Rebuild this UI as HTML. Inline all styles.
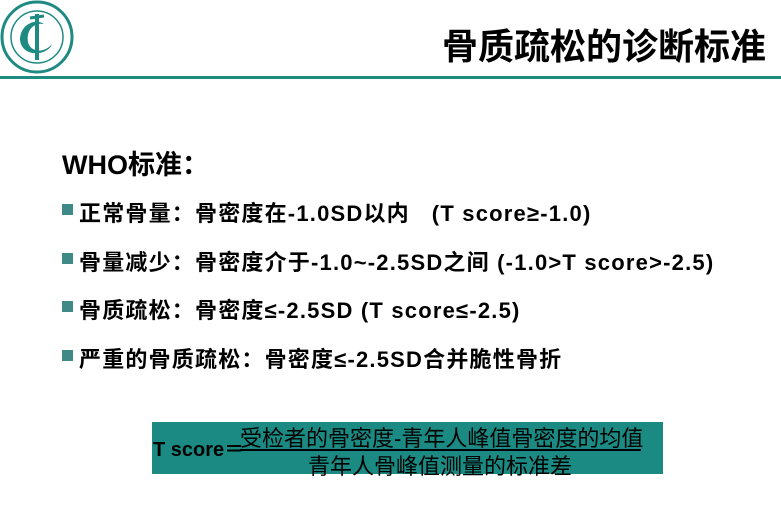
<!DOCTYPE html>
<html><head><meta charset="utf-8"><style>
body{margin:0;width:781px;height:511px;background:#fff;position:relative;overflow:hidden;font-family:"Liberation Sans","Noto Sans CJK SC",sans-serif;}
.t{position:absolute;white-space:nowrap;font-weight:bold;color:#000}
.r{font-size:22px;letter-spacing:1.2px;left:79px}
.b{position:absolute;left:62px;width:11px;height:11px;background:#3f8a86}
</style></head><body>
<svg style="position:absolute;left:0;top:0" width="76" height="76" viewBox="0 0 76 76">
<circle cx="37" cy="37" r="35" fill="#fff" stroke="#1f8a82" stroke-width="3"/>
<circle cx="37" cy="37" r="26" fill="#fff" stroke="#1f8a82" stroke-width="1.5"/>
<path d="M20 40 C20 24 36 18 44 24 C34 22 26 30 28 42 C30 52 44 54 52 44 C48 56 22 58 20 40Z" fill="#1f8a82"/>
<path d="M37 14 L37 60" stroke="#1f8a82" stroke-width="4"/>
<path d="M30 18 L44 16" stroke="#1f8a82" stroke-width="3"/>
</svg>
<div class="t" style="left:442px;top:18px;font-size:36px">骨质疏松的诊断标准</div>
<div style="position:absolute;left:0;top:76px;width:781px;height:3px;background:#1f8a82"></div>
<div class="t" style="left:62px;top:143px;font-size:27px">WHO标准：</div>
<div class="b" style="top:204px"></div>
<div class="t r" style="top:196px">正常骨量：骨密度在-1.0SD以内 &nbsp;&nbsp;(T score≥-1.0)</div>
<div class="b" style="top:253px"></div>
<div class="t r" style="top:245px">骨量减少：骨密度介于-1.0~-2.5SD之间 (-1.0&gt;T score&gt;-2.5)</div>
<div class="b" style="top:301px"></div>
<div class="t r" style="top:293px">骨质疏松：骨密度≤-2.5SD (T score≤-2.5)</div>
<div class="b" style="top:350px"></div>
<div class="t r" style="top:342px">严重的骨质疏松：骨密度≤-2.5SD合并脆性骨折</div>
<div style="position:absolute;left:152px;top:422px;width:511px;height:52px;background:#1a8a82"></div>
<div class="t" style="left:153px;top:438px;font-size:20px;line-height:24px">T score＝</div>
<div style="position:absolute;left:240px;top:421px;font-size:22px;color:#000;white-space:nowrap">受检者的骨密度-青年人峰值骨密度的均值</div>
<div style="position:absolute;left:240px;top:449px;width:401px;height:2px;background:#000"></div>
<div style="position:absolute;left:308px;top:449px;font-size:22px;color:#000;white-space:nowrap">青年人骨峰值测量的标准差</div>
</body></html>
